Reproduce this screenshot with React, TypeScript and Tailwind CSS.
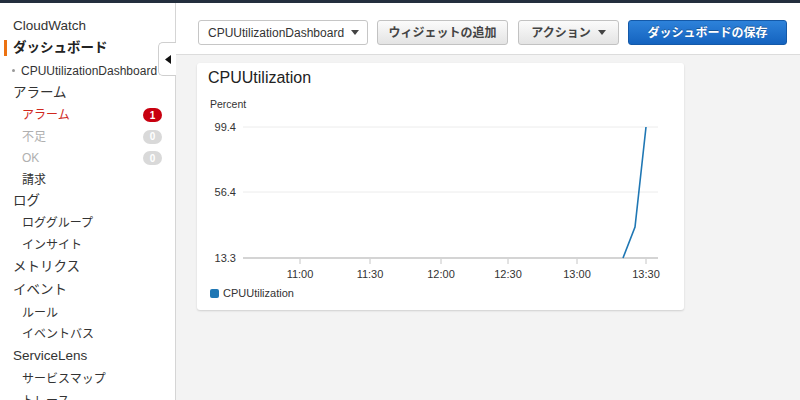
import React from 'react'

const font = { fontFamily: '"Liberation Sans", "Noto Sans CJK JP", sans-serif' }

type Item = { label: string; level: 0 | 1 | 2; h: number; tone?: 'active' | 'red' | 'muted'; badge?: string }

const items: Item[] = [
  { label: 'CloudWatch', level: 0, h: 22 },
  { label: 'ダッシュボード', level: 0, h: 22, tone: 'active' },
  { label: 'CPUUtilizationDashboard', level: 2, h: 23 },
  { label: 'アラーム', level: 0, h: 22 },
  { label: 'アラーム', level: 1, h: 22, tone: 'red', badge: '1' },
  { label: '不足', level: 1, h: 21, tone: 'muted', badge: '0' },
  { label: 'OK', level: 1, h: 22, tone: 'muted', badge: '0' },
  { label: '請求', level: 1, h: 21 },
  { label: 'ログ', level: 0, h: 22 },
  { label: 'ロググループ', level: 1, h: 22 },
  { label: 'インサイト', level: 1, h: 22 },
  { label: 'メトリクス', level: 0, h: 23 },
  { label: 'イベント', level: 0, h: 23 },
  { label: 'ルール', level: 1, h: 21 },
  { label: 'イベントバス', level: 1, h: 22 },
  { label: 'ServiceLens', level: 0, h: 23 },
  { label: 'サービスマップ', level: 1, h: 22 },
  { label: 'トレース', level: 1, h: 22 },
]

function SideItem({ item }: { item: Item }) {
  let cls = 'text-[#333]'
  if (item.tone === 'red') cls = 'text-[#d0281e]'
  if (item.tone === 'muted') cls = 'text-[#b0b0b0]'
  if (item.tone === 'active') cls = 'text-[#222] font-bold'

  return (
    <div className="relative flex items-center pr-[13px] shrink-0" style={{ height: item.h }}>
      {item.tone === 'active' && <div className="absolute left-[4px] top-[3px] bottom-[3px] w-[3px] bg-[#ec7211]" />}
      {item.level === 0 && <span className={`pl-[13px] text-[13.5px] ${cls}`}>{item.label}</span>}
      {item.level === 1 && <span className={`pl-[22px] text-[12px] ${cls}`}>{item.label}</span>}
      {item.level === 2 && (
        <span className="pl-[12px] text-[12px] text-[#333] flex items-center">
          <span className="w-[3px] h-[3px] rounded-full bg-[#999] mr-[6px]" />
          {item.label}
        </span>
      )}
      {item.badge && (
        <span
          className={`ml-auto h-[14px] w-[19px] rounded-full flex items-center justify-center text-[10px] font-bold text-white ${
            item.badge === '1' ? 'bg-[#c8000f]' : 'bg-[#d9d9d9]'
          }`}
        >
          {item.badge}
        </span>
      )}
    </div>
  )
}

function Caret({ color = '#444' }: { color?: string }) {
  return (
    <svg width="8" height="5" viewBox="0 0 8 5" className="ml-[7px]">
      <path d="M0 0 L8 0 L4 5 Z" fill={color} />
    </svg>
  )
}

const xTicks = [
  { x: 92, t: '11:00' },
  { x: 162, t: '11:30' },
  { x: 233, t: '12:00' },
  { x: 300, t: '12:30' },
  { x: 369, t: '13:00' },
  { x: 438, t: '13:30' },
]

const yTicks = [
  { y: 12, t: '99.4' },
  { y: 77, t: '56.4' },
  { y: 143, t: '13.3' },
]

function Chart() {
  return (
    <svg width="470" height="168" className="block" style={font}>
      {yTicks.map((g) => (
        <g key={g.t}>
          <line x1="35" x2="450" y1={g.y} y2={g.y} stroke={g.y === 143 ? '#c6c6c6' : '#ececec'} strokeWidth={g.y === 143 ? 1.5 : 1} />
          <text x="28" y={g.y + 4} textAnchor="end" fontSize="11" fill="#333">
            {g.t}
          </text>
        </g>
      ))}
      {xTicks.map((t) => (
        <g key={t.t}>
          <line x1={t.x} x2={t.x} y1="144" y2="149" stroke="#c6c6c6" />
          <text x={t.x} y="163" textAnchor="middle" fontSize="11" fill="#333">
            {t.t}
          </text>
        </g>
      ))}
      <polyline points="415,143 427,112 438,12" fill="none" stroke="#1f77b4" strokeWidth="1.6" />
    </svg>
  )
}

export default function App() {
  return (
    <div className="w-[800px] h-[400px] overflow-hidden flex flex-col bg-white" style={font}>
      <div className="h-[3px] shrink-0 bg-[#232f3e]" />
      <div className="flex flex-1 min-h-0 overflow-hidden relative">
        <aside className="w-[176px] shrink-0 border-r border-[#d5d5d5] pt-[12px] bg-white">
          {items.map((it, i) => (
            <SideItem key={i} item={it} />
          ))}
        </aside>

        <div className="absolute left-[158px] top-[39px] w-[18px] h-[34px] bg-white border border-r-0 border-[#cfcfcf] rounded-l-[5px] flex items-center justify-center">
          <svg width="6" height="9" viewBox="0 0 6 9">
            <path d="M6 0 L6 9 L0 4.5 Z" fill="#111" />
          </svg>
        </div>

        <main className="flex-1 flex flex-col bg-[#f3f3f3]">
          <div className="h-[52px] shrink-0 bg-white border-b border-[#dcdcdc] pl-[22px] pt-[17px] flex items-start gap-[9px]">
            <button className="h-[25px] w-[170px] border border-[#c6c6c6] rounded-[3px] bg-white flex items-center pl-[9px] text-[12px] text-[#333]">
              CPUUtilizationDashboard
              <Caret />
            </button>
            <button className="h-[25px] w-[131px] border border-[#c2c2c2] rounded-[3px] bg-gradient-to-b from-[#fbfbfb] to-[#e4e4e4] text-[12px] font-bold text-[#444] flex items-center justify-center">
              ウィジェットの追加
            </button>
            <button className="h-[25px] w-[101px] border border-[#c2c2c2] rounded-[3px] bg-gradient-to-b from-[#fbfbfb] to-[#e4e4e4] text-[12px] font-bold text-[#444] flex items-center justify-center ml-[1px]">
              アクション
              <Caret />
            </button>
            <button className="h-[25px] w-[159px] border border-[#1459a8] rounded-[3px] bg-gradient-to-b from-[#2d82da] to-[#1463bf] text-[12px] font-bold text-white flex items-center justify-center [text-shadow:0_-1px_0_rgba(0,0,0,0.3)]">
              ダッシュボードの保存
            </button>
          </div>

          <div className="pl-[21px] pt-[8px]">
            <div className="w-[487px] h-[247px] bg-white rounded-[3px] shadow-[0_1px_2px_rgba(0,0,0,0.15)] pl-[11px] pt-[5px]">
              <div className="text-[16px] text-[#222] leading-[20px]">CPUUtilization</div>
              <div className="text-[10.5px] text-[#333] mt-[10px] pl-[2px] leading-[12px]">Percent</div>
              <div className="mt-[5px]">
                <Chart />
              </div>
              <div className="flex items-center mt-[2px] pl-[2px]">
                <span className="w-[9px] h-[9px] rounded-[2px] bg-[#1f77b4] mr-[4px]" />
                <span className="text-[11px] text-[#333]">CPUUtilization</span>
              </div>
            </div>
          </div>
        </main>
      </div>
    </div>
  )
}
